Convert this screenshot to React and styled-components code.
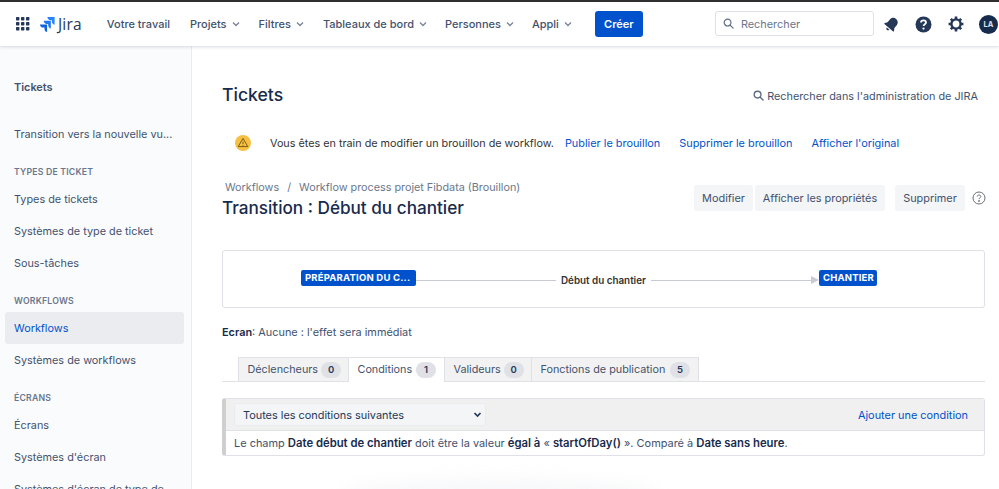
import React from "react";
import styled, { createGlobalStyle } from "styled-components";

const Global = createGlobalStyle`
  html, body { margin: 0; padding: 0; background: #fff; }
  body { font-family: Inter, "Liberation Sans", sans-serif; font-size: 11px; color: #172b4d; -webkit-font-smoothing: antialiased; }
  * { box-sizing: border-box; }
`;

const Page = styled.div`
  width: 999px; height: 489px; overflow: hidden; display: flex; flex-direction: column; border-top: 2px solid #2f2f2f; position: relative;
`;
const Header = styled.header`
  height: 44px; flex: none; display: flex; align-items: center; padding: 0 0 0 16px; background: #fff;
  box-shadow: 0 1px 3px rgba(9,30,66,.16); position: relative; z-index: 2;
`;
const Brand = styled.div`display: flex; align-items: center; margin-right: 25px;`;
const GridSlot = styled.span`display: flex; margin-right: 10px;`;
const LogoWord = styled.span`font-family: "Open Sans", sans-serif; font-size: 15.5px; font-weight: 400; color: #253858; letter-spacing: .2px; margin-left: 3px;`;
const Nav = styled.nav`display: flex; align-items: center;`;
const NavItem = styled.div`display: flex; align-items: center; gap: 4px; margin-right: ${p => p.$mr}px; font-size: 11px; font-weight: 500; color: #42526e; white-space: nowrap;`;
const Create = styled.button`
  width: 48px; height: 26px; border: 0; border-radius: 3px; background: #0052cc; color: #fff; font: 600 11px Inter, sans-serif; padding: 0; margin-left: 10px; margin-right: 72px;
`;
const Search = styled.div`
  width: 159px; height: 25px; border: 1px solid #dfe1e6; border-radius: 3px; display: flex; align-items: center; gap: 7px; padding: 0 0 0 7px; color: #6b778c; font-size: 10.9px; margin-right: 2px; margin-top: -1px;
`;
const IconBtn = styled.div`width: 32px; display: flex; align-items: center; justify-content: center;`;
const Avatar = styled.div`width: 19px; height: 19px; border-radius: 50%; background: #172b4d; color: #dfe1e6; font-size: 7.5px; font-weight: 700; display: flex; align-items: center; justify-content: center; margin-left: 7px;`;

const Body = styled.div`flex: 1; display: flex; min-height: 0;`;
const Sidebar = styled.aside`width: 192px; flex: none; background: #fafbfc; border-right: 1px solid #ebecf0; padding: 31px 7px 0 5px; overflow: hidden;`;
const SideTitle = styled.div`height: 20px; line-height: 20px; padding-left: 9px; font-size: 10.9px; font-weight: 600; color: #42526e; margin-bottom: 21px;`;
const SideItem = styled.div`
  height: 32px; line-height: 32px; padding-left: 9px; font-size: 10.85px; border-radius: 3px; white-space: nowrap;
  color: ${p => p.$active ? "#0052cc" : "#42526e"}; background: ${p => p.$active ? "#ebecf0" : "transparent"};
`;
const SideHeading = styled.div`height: 12px; line-height: 12px; padding-left: 9px; margin: 16px 0 5px; font-size: 8.7px; font-weight: 600; letter-spacing: .2px; color: #6b778c;`;

const Main = styled.main`flex: 1; min-width: 0; padding: 34px 14px 0 30px;`;
const TopRow = styled.div`display: flex; justify-content: space-between; align-items: center; height: 28px; padding-right: 7px;`;
const H1 = styled.h1`margin: 0; font-size: 17.6px; font-weight: 500; color: #172b4d;`;
const AdminSearch = styled.div`display: flex; align-items: center; gap: 3px; font-size: 10.85px; color: #42526e; margin-top: 3px;`;
const Banner = styled.div`display: flex; align-items: center; height: 20px; margin-top: 25px; padding-left: 13px; font-size: 10.8px; color: #333;`;
const BannerText = styled.span`margin-left: 19px; margin-right: 11px;`;
const BLink = styled.a`color: #0052cc; margin-right: 19px; font-size: 10.9px;`;
const HeadRow = styled.div`display: flex; justify-content: space-between; margin-top: 27px; height: 43px;`;
const Crumbs = styled.div`display: flex; font-size: 10.8px; color: #6b778c; padding-left: 3px; height: 16px; line-height: 16px;`;
const Sep = styled.span`margin: 0 8px;`;
const H2 = styled.h2`margin: 1px 0 0; font-size: 17.15px; font-weight: 500; line-height: 22px; color: #172b4d;`;
const Actions = styled.div`display: flex; align-items: center; height: 26px; margin-top: 5px; margin-right: -1px;`;
const Btn = styled.div`height: 26px; line-height: 26px; width: ${p => p.$w}px; text-align: center; background: #f4f5f7; border-radius: 3px; font-size: 10.9px; color: #42526e; margin-left: ${p => p.$ml || 0}px;`;
const HelpSlot = styled.span`display: flex; margin-left: 7px;`;
const Diagram = styled.div`
  margin-top: 27px; height: 58px; border: 1px solid #dfe1e6; border-radius: 3px; display: flex; align-items: center; padding: 0 0 0 78px;
`;
const Status = styled.div`
  height: 16px; line-height: 16px; flex: none; width: ${p => p.$w}px; padding-left: 4px; background: #0052cc; color: #fff; border-radius: 2px; font-size: 9.5px; font-weight: 700; letter-spacing: .2px; white-space: nowrap; overflow: hidden; margin-top: -2px;
`;
const Line = styled.div`flex: ${p => p.$w}px 0 0; height: 1px; background: #c8ccd2; margin-top: 2px;`;
const Arrow = styled.div`width: 0; height: 0; border-left: 8px solid #c8ccd2; border-top: 4px solid transparent; border-bottom: 4px solid transparent; margin-top: 2px;`;
const LineLabel = styled.div`font-size: 9.85px; font-weight: 600; color: #333; padding: 0 5px; margin-top: 1px; white-space: nowrap;`;
const ScreenLine = styled.div`margin-top: 16px; font-size: 10.9px; color: #42526e; height: 16px; line-height: 16px; b { color: #172b4d; font-weight: 600; }`;
const Tabs = styled.div`margin-top: 17px; height: 25px; padding-left: 16px; border-bottom: 1px solid #dfe1e6; display: flex;`;
const Tab = styled.div`
  height: 25px; display: flex; align-items: center; gap: 3px; padding: 0 8px 0 8.5px; padding-bottom: ${p => p.$active ? 1 : 0}px; font-size: 10.8px; color: #42526e;
  border: 1px solid #dfe1e6; border-left-width: ${p => p.$first ? 1 : 0}px; border-bottom-width: ${p => p.$active ? 0 : 1}px;
  background: ${p => p.$active ? "#fff" : "#f2f2f2"};
  width: ${p => p.$w}px; white-space: nowrap; justify-content: space-between;
`;
const Count = styled.span`flex: none; width: 20px; height: 16px; line-height: 16px; border-radius: 8px; text-align: center; background: #dfe1e6; font-size: 9.5px; font-weight: 600; color: #253858;`;
const Panel = styled.div`margin-top: 16px; height: 58px; border: 1px solid #dfe1e6; border-left: 4px solid #cfcfcf; border-radius: 3px;`;
const PanelHead = styled.div`height: 32px; background: #f0f0f0; border-bottom: 1px solid #dfe1e6; display: flex; align-items: center; justify-content: space-between; padding: 0 16px 0 8px;`;
const SelectBox = styled.div`
  width: 252px; height: 23px; background: #f4f5f7; border: 1px solid #ebecf0; border-radius: 3px; display: flex; align-items: center; justify-content: space-between; padding: 0 3px 0 8px; font-size: 10.9px; color: #253858;
`;
const AddLink = styled.a`color: #0052cc; font-size: 10.9px;`;
const PanelRow = styled.div`height: 24px; line-height: 24px; padding-left: 8px; font-size: 10.95px; color: #42526e; white-space: nowrap; b { color: #172b4d; font-weight: 600; font-size: 11.3px; }`;
const Glow = styled.div`position: absolute; left: 340px; bottom: -20px; width: 320px; height: 30px; border-radius: 50%; background: #f4f5f7; filter: blur(8px); opacity: .7;`;

const Caret = () => (
  <svg width="10" height="10" viewBox="0 0 10 10" fill="none" stroke="#7a869a" strokeWidth="1.4"><path d="M2 3.5 5 6.5 8 3.5" /></svg>
);
const Grid = () => (
  <svg width="14" height="14" viewBox="0 0 14 14" fill="#253858">
    {[0, 5, 10].flatMap(y => [0, 5, 10].map(x => <rect key={x + "-" + y} x={x} y={y} width="3.4" height="3.4" rx=".7" />))}
  </svg>
);
const JiraMark = () => (
  <svg width="15" height="15" viewBox="0 0 15 15" fill="#2684ff">
    <path d="M14.6 0H7.4c0 1.8 1.4 3.2 3.2 3.2h1.3v1.3c0 1.8 1.4 3.2 2.7 3.2V0z" />
    <path d="M10.8 3.7H3.7c0 1.8 1.4 3.2 3.2 3.2h1.3v1.3c0 1.8 1.4 3.2 2.6 3.2V3.7z" fill="#1f78f0" />
    <path d="M7.1 7.4H0c0 1.8 1.4 3.2 3.2 3.2h1.3v1.3c0 1.8 1.4 3.1 2.6 3.1V7.4z" fill="#0f62d8" />
  </svg>
);
const Mag = ({ size = 12, color = "#5e6c84", w = 1.3 }) => (
  <svg width={size} height={size} viewBox="0 0 12 12" fill="none" stroke={color} strokeWidth={w}><circle cx="5" cy="5" r="3.7" /><path d="M7.8 7.8 11 11" strokeLinecap="round" /></svg>
);
const Bell = () => (
  <svg width="17" height="17" viewBox="0 0 16 16" fill="#253858" style={{ transform: "rotate(40deg)" }}>
    <path d="M8 1.2c-2.6 0-4.2 1.9-4.2 4.4v3.2L2.3 11v1h11.4v-1l-1.5-2.2V5.6C12.2 3.1 10.6 1.2 8 1.2z" /><path d="M6.4 13h3.2c0 1-.7 1.7-1.6 1.7S6.4 14 6.4 13z" />
  </svg>
);
const Help = () => (
  <svg width="17" height="17" viewBox="0 0 17 17"><circle cx="8.5" cy="8.5" r="8" fill="#253858" />
    <path d="M6 6.6c0-1.4 1.1-2.2 2.5-2.2s2.5.8 2.5 2.1c0 1.9-2.4 1.7-2.4 3.5" fill="none" stroke="#fff" strokeWidth="1.8" />
    <circle cx="8.5" cy="12.6" r="1.1" fill="#fff" /></svg>
);
const Gear = () => (
  <svg width="16" height="16" viewBox="0 0 16 16" fill="none" stroke="#253858">
    <circle cx="8" cy="8" r="4.6" strokeWidth="2.4" />
    <path strokeWidth="2.6" d="M8 .6v2.4M8 13v2.4M.6 8H3M13 8h2.4M2.8 2.8l1.6 1.6M11.6 11.6l1.6 1.6M13.2 2.8l-1.6 1.6M4.4 11.6l-1.6 1.6" />
  </svg>
);
const Warn = () => (
  <svg width="16" height="16" viewBox="0 0 16 16"><circle cx="8" cy="8" r="8" fill="#f6c044" />
    <path d="M8 3.4 3.2 11.6h9.6L8 3.4z" fill="none" stroke="#7a5c14" strokeWidth="1" strokeLinejoin="round" />
    <path d="M8 6.6v2.6M8 10v.7" stroke="#7a5c14" strokeWidth="1" /></svg>
);
const Question = () => (
  <svg width="14" height="14" viewBox="0 0 14 14" fill="none" stroke="#6b6f76" strokeWidth="1"><circle cx="7" cy="7" r="6" />
    <path d="M5.2 5.5C5.3 4.5 6 4 7 4s1.8.6 1.8 1.5c0 1.3-1.8 1.3-1.8 2.7" /><circle cx="7" cy="10" r=".5" fill="#6b6f76" /></svg>
);
const SelectCaret = () => (
  <svg width="9" height="9" viewBox="0 0 9 9" fill="none" stroke="#253858" strokeWidth="1.7"><path d="M1.5 3 4.5 6 7.5 3" /></svg>
);

export default function App() {
  return (
    <Page>
      <Global />
      <Header>
        <Brand>
          <GridSlot><Grid /></GridSlot>
          <JiraMark />
          <LogoWord>Jira</LogoWord>
        </Brand>
        <Nav>
          <NavItem $mr={20}>Votre travail</NavItem>
          <NavItem $mr={18}>Projets <Caret /></NavItem>
          <NavItem $mr={18}>Filtres <Caret /></NavItem>
          <NavItem $mr={17}>Tableaux de bord <Caret /></NavItem>
          <NavItem $mr={17}>Personnes <Caret /></NavItem>
          <NavItem $mr={12}>Appli <Caret /></NavItem>
        </Nav>
        <Create>Créer</Create>
        <Search><Mag size={11} />Rechercher</Search>
        <IconBtn><Bell /></IconBtn>
        <IconBtn><Help /></IconBtn>
        <IconBtn><Gear /></IconBtn>
        <Avatar>LA</Avatar>
      </Header>
      <Body>
        <Sidebar>
          <SideTitle>Tickets</SideTitle>
          <SideItem>Transition vers la nouvelle vu...</SideItem>
          <SideHeading>TYPES DE TICKET</SideHeading>
          <SideItem>Types de tickets</SideItem>
          <SideItem>Systèmes de type de ticket</SideItem>
          <SideItem>Sous-tâches</SideItem>
          <SideHeading>WORKFLOWS</SideHeading>
          <SideItem $active>Workflows</SideItem>
          <SideItem>Systèmes de workflows</SideItem>
          <SideHeading>ÉCRANS</SideHeading>
          <SideItem>Écrans</SideItem>
          <SideItem>Systèmes d'écran</SideItem>
          <SideItem>Systèmes d'écran de type de</SideItem>
        </Sidebar>
        <Main>
          <TopRow>
            <H1>Tickets</H1>
            <AdminSearch><Mag size={11} w={1.5} />Rechercher dans l'administration de JIRA</AdminSearch>
          </TopRow>
          <Banner>
            <Warn />
            <BannerText>Vous êtes en train de modifier un brouillon de workflow.</BannerText>
            <BLink>Publier le brouillon</BLink>
            <BLink>Supprimer le brouillon</BLink>
            <BLink>Afficher l'original</BLink>
          </Banner>
          <HeadRow>
            <div>
              <Crumbs>Workflows<Sep>/</Sep>Workflow process projet Fibdata (Brouillon)</Crumbs>
              <H2>Transition : Début du chantier</H2>
            </div>
            <Actions>
              <Btn $w={59}>Modifier</Btn>
              <Btn $w={130} $ml={2}>Afficher les propriétés</Btn>
              <Btn $w={70} $ml={10}>Supprimer</Btn>
              <HelpSlot><Question /></HelpSlot>
            </Actions>
          </HeadRow>
          <Diagram>
            <Status $w={115}>PRÉPARATION DU C...</Status>
            <Line $w={140} />
            <LineLabel>Début du chantier</LineLabel>
            <Line $w={160} />
            <Arrow />
            <Status $w={58}>CHANTIER</Status>
          </Diagram>
          <ScreenLine><b>Ecran</b>: Aucune : l'effet sera immédiat</ScreenLine>
          <Tabs>
            <Tab $first $w={111}>Déclencheurs <Count>0</Count></Tab>
            <Tab $active $w={96}>Conditions <Count>1</Count></Tab>
            <Tab $w={87}>Valideurs <Count>0</Count></Tab>
            <Tab $w={167}>Fonctions de publication <Count>5</Count></Tab>
          </Tabs>
          <Panel>
            <PanelHead>
              <SelectBox>Toutes les conditions suivantes <SelectCaret /></SelectBox>
              <AddLink>Ajouter une condition</AddLink>
            </PanelHead>
            <PanelRow>Le champ <b>Date début de chantier</b> doit être la valeur <b>égal à</b> « <b>startOfDay()</b> ». Comparé à <b>Date sans heure</b>.</PanelRow>
          </Panel>
        </Main>
      </Body>
      <Glow />
    </Page>
  );
}
